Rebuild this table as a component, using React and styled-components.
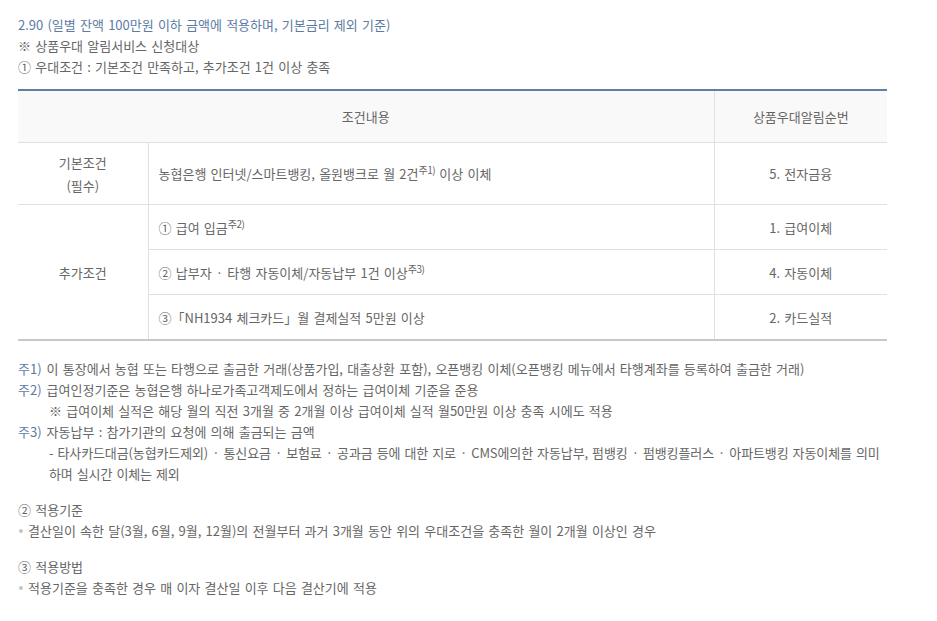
import React from "react";
import styled, { createGlobalStyle } from "styled-components";

const Global = createGlobalStyle`
  body {
    margin: 0;
    background: #fff;
    font-family: "Noto Sans CJK KR", "Noto Sans", sans-serif;
    color: #666;
  }
`;

const Page = styled.div`
  padding: 14px 50px 20px 18px;
  font-size: 13px;
  line-height: 21px;
  color: #666;
  word-spacing: 1.3px;
`;

const Line = styled.div`
  color: ${(p) => (p.$accent ? "#5b7ba3" : "#666")};
`;

const Intro = styled.div`
  margin-bottom: 12px;
`;

const Table = styled.table`
  width: 869px;
  border-collapse: collapse;
  border-top: 2px solid #5f7fa7;
  border-bottom: 2px solid #c8c8c8;
  font-size: 13px;
`;

const Th = styled.th`
  height: 51px;
  padding: 0;
  background: #f9f9f9;
  font-weight: normal;
  color: #666;
  text-align: center;
  border-bottom: 1px solid #e0e0e0;
  border-left: ${(p) => (p.$divided ? "1px solid #e0e0e0" : "none")};
`;

const Td = styled.td`
  height: ${(p) => p.$h || 44}px;
  padding: 0 ${(p) => (p.$left ? "10px" : "0")};
  text-align: ${(p) => (p.$left ? "left" : "center")};
  color: #666;
  border-bottom: 1px solid #e0e0e0;
  border-left: ${(p) => (p.$divided ? "1px solid #e0e0e0" : "none")};
  line-height: 23px;
`;

const Sup = styled.sup`
  font-size: 10px;
  line-height: 0;
  vertical-align: 5px;
  letter-spacing: -0.5px;
  word-spacing: 0;
`;

const Notes = styled.div`
  margin-top: 17px;
`;

const Note = styled.div`
  display: flex;
`;

const NoteKey = styled.span`
  color: #5b7ba3;
  flex: none;
  margin-right: 5px;
`;

const Indent = styled.div`
  padding-left: 31px;
  letter-spacing: ${(p) => (p.$tight ? "-0.12px" : "normal")};
`;

const Section = styled.div`
  margin-top: 15px;
`;

const Bullet = styled.div`
  position: relative;
  padding-left: 10px;
  &::before {
    content: "";
    position: absolute;
    left: 1px;
    top: 9px;
    width: 4px;
    height: 4px;
    border-radius: 50%;
    background: #c4c4c4;
  }
`;

export default function App() {
  return (
    <>
      <Global />
      <Page>
        <Intro>
          <Line $accent>2.90 (일별 잔액 100만원 이하 금액에 적용하며, 기본금리 제외 기준)</Line>
          <Line>※ 상품우대 알림서비스 신청대상</Line>
          <Line>① 우대조건 : 기본조건 만족하고, 추가조건 1건 이상 충족</Line>
        </Intro>
        <Table>
          <colgroup>
            <col style={{ width: 130 }} />
            <col style={{ width: 566 }} />
            <col style={{ width: 173 }} />
          </colgroup>
          <thead>
            <tr>
              <Th colSpan={2}>조건내용</Th>
              <Th $divided>상품우대알림순번</Th>
            </tr>
          </thead>
          <tbody>
            <tr>
              <Td $h={61}>
                기본조건
                <br />
                (필수)
              </Td>
              <Td $left $divided>
                농협은행 인터넷/스마트뱅킹, 올원뱅크로 월 2건<Sup>주1)</Sup> 이상 이체
              </Td>
              <Td $divided>5. 전자금융</Td>
            </tr>
            <tr>
              <Td rowSpan={3}>추가조건</Td>
              <Td $left $divided $h={43}>
                ① 급여 입금<Sup>주2)</Sup>
              </Td>
              <Td $divided>1. 급여이체</Td>
            </tr>
            <tr>
              <Td $left $divided $h={44}>
                ② 납부자 · 타행 자동이체/자동납부 1건 이상<Sup>주3)</Sup>
              </Td>
              <Td $divided>4. 자동이체</Td>
            </tr>
            <tr>
              <Td $left $divided $h={44}>
                ③「NH1934 체크카드」월 결제실적 5만원 이상
              </Td>
              <Td $divided>2. 카드실적</Td>
            </tr>
          </tbody>
        </Table>
        <Notes>
          <Note>
            <NoteKey>주1)</NoteKey>
            <span>이 통장에서 농협 또는 타행으로 출금한 거래(상품가입, 대출상환 포함), 오픈뱅킹 이체(오픈뱅킹 메뉴에서 타행계좌를 등록하여 출금한 거래)</span>
          </Note>
          <Note>
            <NoteKey>주2)</NoteKey>
            <span>급여인정기준은 농협은행 하나로가족고객제도에서 정하는 급여이체 기준을 준용</span>
          </Note>
          <Indent>※ 급여이체 실적은 해당 월의 직전 3개월 중 2개월 이상 급여이체 실적 월50만원 이상 충족 시에도 적용</Indent>
          <Note>
            <NoteKey>주3)</NoteKey>
            <span>자동납부 : 참가기관의 요청에 의해 출금되는 금액</span>
          </Note>
          <Indent $tight>
            - 타사카드대금(농협카드제외) · 통신요금 · 보험료 · 공과금 등에 대한 지로 · CMS에의한 자동납부, 펌뱅킹 · 펌뱅킹플러스 · 아파트뱅킹 자동이체를 의미하며 실시간 이체는 제외
          </Indent>
        </Notes>
        <Section>
          <div>② 적용기준</div>
          <Bullet>결산일이 속한 달(3월, 6월, 9월, 12월)의 전월부터 과거 3개월 동안 위의 우대조건을 충족한 월이 2개월 이상인 경우</Bullet>
        </Section>
        <Section>
          <div>③ 적용방법</div>
          <Bullet>적용기준을 충족한 경우 매 이자 결산일 이후 다음 결산기에 적용</Bullet>
        </Section>
      </Page>
    </>
  );
}
